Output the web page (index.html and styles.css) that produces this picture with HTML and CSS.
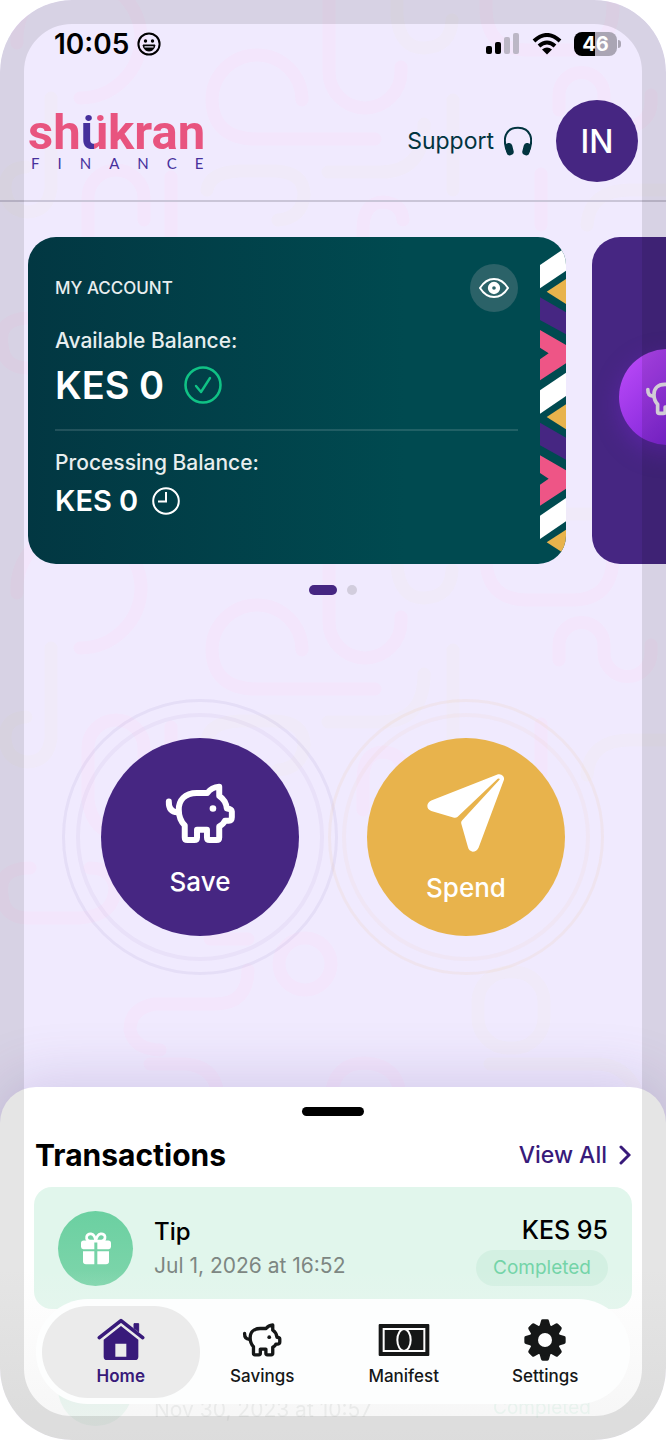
FILE: index.html
```
<!doctype html>
<html lang="en">
	<head>
		<meta charset="UTF-8" />
		<meta name="viewport" content="width=device-width, initial-scale=1.0" />
		<title>Shukran Finance</title>
		<link rel="stylesheet" href="styles.css">
	</head>
	<body>
		<!-- Shared icons -->
		<svg class="sprite" aria-hidden="true">
			<symbol id="pig" viewBox="0 0 216 196">
				<g fill="none" stroke="currentColor" stroke-width="18" stroke-linecap="round" stroke-linejoin="round">
					<path d="M14 62 Q13 93 40 94" />
					<path d="M130 36 H98 C62 36 44 58 44 86 C44 108 51 123 62 134 V170 Q62 178 70 178 H91 Q99 178 99 170 V147 H129 V170 Q129 178 137 178 H158 Q166 178 166 170 V137 C174 133 180 128 183 120 H194 Q204 119 204 109 V92 Q203 84 189 83 C187 67 179 53 166 45 V17 Q143 19 130 36 Z" />
				</g>
				<circle cx="147" cy="83" r="10" fill="currentColor" />
			</symbol>
			<symbol id="gift" viewBox="0 0 90 98">
				<g fill="currentColor">
					<path d="M8 25 H40 V51 H7 Q0 51 0 44 V33 Q0 25 8 25 Z M49 25 H82 Q90 25 90 33 V44 Q90 51 83 51 H49 Z M6 57 H40 V96 H15 Q6 96 6 88 Z M49 57 H84 V88 Q84 96 75 96 H49 Z" />
				</g>
				<path d="M43 27 H27 Q15 25 17 13 Q20 4 30 5 Q42 7 44 27 Q48 7 59 5 Q70 4 72 13 Q73 25 62 27 Z" fill="none" stroke="currentColor" stroke-width="8" />
			</symbol>
		</svg>

		<div class="phone">
			<svg class="doodles" aria-hidden="true">
				<defs>
					<pattern id="doodle" y="-10" width="800" height="550" patternUnits="userSpaceOnUse">
						<g transform="translate(0 -540)" fill="none" stroke-width="13" stroke-linecap="round">
							<g stroke="#f3e6fc">
								<path d="M17 593 A62 62 0 0 1 141 586 A61 61 0 0 1 80 648" />
								<path d="M302 650 A45 45 0 0 0 212 650 Q213 689 257 689 H375" />
								<path d="M329 530 V622 A36 36 0 0 0 401 622 V617" />
								<path d="M486 530 V558 Q486 600 528 600 H572 Q613 600 613 556 V530" />
								<path d="M559 660 V645 A22 22 0 0 1 604 645 V653 A23 23 0 0 0 651 653 V645" />
								<path d="M171 900 V727" />
								<path d="M144 770 V748 A28 28 0 0 0 88 748 V800 Q92 832 122 836" />
								<path d="M30 868 Q-2 868 2 895 Q4 918 28 918 H80 Q115 916 115 887 Q112 868 90 868" />
								<path d="M210 939 H248" />
								<path d="M248 970 Q248 1004 215 1004 H155 Q130 1008 130 1030 Q134 1049 160 1050" />
								<path d="M150 1064 H185 Q215 1066 218 1095" />
								<path d="M331 1095 Q335 1063 365 1063 Q398 1065 400 1095" />
								<path d="M363 810 V780 Q363 752 384 752 Q402 754 403 770" />
								<path d="M541 724 V775" />
								<circle cx="305" cy="964" r="26" />
							</g>
							<g stroke="#f0eaf9">
								<path d="M397 530 V565 Q399 598 424 598 Q451 597 452 570" />
								<path d="M51 648 V738 Q48 762 27 762 Q5 760 5 736 Q6 718 26 717" />
								<path d="M453 650 V740" />
								<path d="M424 674 Q424 722 380 722 H328" />
								<path d="M207 740 Q210 722 240 721 H275 Q304 722 304 745 Q302 768 278 770" />
								<path d="M587 775 Q590 740 630 740 H680" />
								<rect x="478" y="972" width="66" height="76" rx="30" />
								<path d="M490 1064 H600 Q625 1066 636 1090" />
							</g>
						</g>
					</pattern>
				</defs>
				<rect width="100%" height="100%" fill="url(#doodle)" />
			</svg>

			<div class="status-bar">
				<div class="clock">
					<span>10:05</span>
					<svg width="24" height="24" viewBox="0 0 24 24" fill="none" stroke="#000" stroke-width="2">
						<circle cx="12" cy="12" r="10.6" />
						<path d="M6 13 H18 Q17 19 12 19 Q7 19 6 13 Z" fill="#000" stroke-width="1" />
						<path d="M7.500 14.800 H16.500" stroke="#efeafe" stroke-width="1.300" />
						<circle cx="8.500" cy="9" r="1.700" fill="#000" stroke="none" />
						<circle cx="15.500" cy="9" r="1.700" fill="#000" stroke="none" />
					</svg>
				</div>
				<div class="signals">
					<svg width="34" height="22" viewBox="0 0 34 22">
						<rect y="13" width="6" height="8" rx="2" />
						<rect x="9" y="9" width="6" height="12" rx="2" />
						<rect x="18" y="4" width="6" height="17" rx="2" fill="#bcb7c6" />
						<rect x="27" width="6" height="21" rx="2" fill="#bcb7c6" />
					</svg>
					<svg width="30" height="22" viewBox="0 0 30 22" fill="none" stroke="#000" stroke-width="4">
						<path d="M2 8 Q15 -4 28 8" />
						<path d="M7 13 Q15 6 23 13" />
						<path d="M10 16.500 Q15 12.500 20 16.500 L15 21.500 Z" fill="#000" stroke="none" />
					</svg>
					<span class="battery">46</span>
				</div>
			</div>

			<header class="top-bar">
				<a class="logo" href="#">
					<span class="logo-name">sh<span class="logo-u">ü</span>kran</span>
					<span class="logo-sub">FINANCE</span>
				</a>
				<a class="support" href="#">
					Support
					<svg width="28" height="30" viewBox="0 0 84 88">
						<path d="M10 76 C-6 38 4 4 42 4 C80 4 90 38 74 76" fill="none" stroke="#02343f" stroke-width="6" />
						<rect x="5" y="50" width="22" height="37" rx="10" transform="rotate(-14 16 68)" fill="#02343f" />
						<rect x="57" y="50" width="22" height="37" rx="10" transform="rotate(14 68 68)" fill="#02343f" />
					</svg>
				</a>
				<button class="avatar">IN</button>
			</header>

			<section class="carousel">
				<article class="card account">
					<div class="card-head">
						<h2>MY ACCOUNT</h2>
						<button class="eye" aria-label="Hide balance">
							<svg width="30" height="20" viewBox="0 0 90 60" fill="none" stroke="#fff">
								<path d="M3 30 Q20 3 45 3 Q70 3 87 30 Q70 57 45 57 Q20 57 3 30 Z" stroke-width="6" />
								<circle cx="45" cy="30" r="12" stroke-width="13" />
							</svg>
						</button>
					</div>
					<p class="label">Available Balance:</p>
					<p class="amount">
						KES 0
						<svg width="38" height="38" viewBox="0 0 38 38" fill="none" stroke="#10c285" stroke-linecap="round" stroke-linejoin="round">
							<circle cx="19" cy="19" r="17.500" stroke-width="2.600" />
							<path d="M12 20 L17 26 L26 12" stroke-width="2.400" />
						</svg>
					</p>
					<hr />
					<p class="label">Processing Balance:</p>
					<p class="amount small">
						KES 0
						<svg width="28" height="28" viewBox="0 0 28 28" fill="none" stroke="#fff" stroke-width="2">
							<circle cx="14" cy="14" r="12.800" />
							<path d="M14 5 V14.500 H6" />
						</svg>
					</p>
					<svg class="kente" viewBox="624 51 78 981" preserveAspectRatio="none" aria-hidden="true">
						<g id="kente-top">
							<path d="M624 135 L702 82 V152 L624 205 Z" fill="#fff" />
							<path d="M644 215 L702 177 V252 Z" fill="#e8b34c" />
						</g>
						<g id="kente-bottom">
							<path d="M624 232 L702 277 V343 L624 300 Z" fill="#462682" />
							<path d="M624 330 L702 375 V430 L624 481 V418 L650 400 L624 383 Z" fill="#ee5586" />
						</g>
						<use href="#kente-top" y="376" />
						<use href="#kente-bottom" y="376" />
						<use href="#kente-top" y="752" />
					</svg>
				</article>
				<article class="card savings-card">
					<span class="savings-icon">
						<svg width="44" height="40"><use href="#pig" /></svg>
					</span>
				</article>
			</section>

			<div class="dots">
				<span class="dot current"></span>
				<span class="dot"></span>
			</div>

			<div class="actions">
				<button class="action save">
					<svg width="72" height="65"><use href="#pig" /></svg>
					Save
				</button>
				<button class="action spend">
					<svg width="78" height="78" viewBox="0 0 234 236" fill="#fff">
						<path d="M214 1 Q223 -1 229 6 Q234 12 231 20 L155 223 Q149 235 137 235 Q126 233 123 222 L103 151 Q101 145 105 141 L219 17 Q219 12 213 14 L91 130 Q87 133 81 132 L12 112 Q0 107 0 96 Q1 85 12 80 Z" />
					</svg>
					Spend
				</button>
			</div>

			<section class="sheet">
				<div class="handle"></div>
				<div class="sheet-head">
					<h1>Transactions</h1>
					<a class="view-all" href="#">
						View All
						<svg width="12" height="20" viewBox="0 0 12 20" fill="none" stroke="#381a7a" stroke-width="3" stroke-linecap="round">
							<path d="M2 2 L10 10 L2 18" />
						</svg>
					</a>
				</div>
				<ul class="transactions">
					<li class="transaction">
						<span class="tx-icon">
							<svg width="30" height="33"><use href="#gift" /></svg>
						</span>
						<div class="tx-info">
							<p class="tx-name">Tip</p>
							<p class="tx-date">Jul 1, 2026 at 16:52</p>
						</div>
						<div class="tx-side">
							<p class="tx-amount">KES 95</p>
							<span class="tx-status">Completed</span>
						</div>
					</li>
					<li class="transaction behind">
						<span class="tx-icon"></span>
						<div class="tx-info">
							<p class="tx-date">Nov 30, 2023 at 10:57</p>
						</div>
						<div class="tx-side">
							<span class="tx-status">Completed</span>
						</div>
					</li>
				</ul>
			</section>

			<nav class="tab-bar">
				<a class="tab active" href="#">
					<svg width="48" height="44" viewBox="0 0 144 130">
						<path d="M7 58 L72 7 L137 58" fill="none" stroke="currentColor" stroke-width="11" stroke-linecap="round" stroke-linejoin="round" />
						<path d="M111 16 H125 V40 L111 29 Z" fill="currentColor" stroke="currentColor" stroke-width="3" stroke-linejoin="round" />
						<path d="M72 23 L124 64 V115 Q124 125 114 125 H30 Q20 125 20 115 V64 Z M55 76 V115 H88 V76 Z" fill="currentColor" fill-rule="evenodd" />
					</svg>
					Home
				</a>
				<a class="tab" href="#">
					<svg width="40" height="44"><use href="#pig" /></svg>
					Savings
				</a>
				<a class="tab" href="#">
					<svg width="52" height="44" viewBox="0 0 156 132">
						<rect x="2" y="18" width="152" height="96" rx="3" fill="currentColor" />
						<rect x="17" y="33" width="122" height="66" fill="none" stroke="#fdfdfd" stroke-width="6" />
						<ellipse cx="78" cy="66" rx="20" ry="33" fill="currentColor" stroke="#fdfdfd" stroke-width="6" />
					</svg>
					Manifest
				</a>
				<a class="tab" href="#">
					<svg width="44" height="44" viewBox="-66 -66 132 132">
						<g fill="currentColor">
							<path id="tooth" d="M-17 -40 L-12 -58 Q-11 -62 -7 -62 H7 Q11 -62 12 -58 L17 -40 V40 L12 58 Q11 62 7 62 H-7 Q-11 62 -12 58 L-17 40 Z" />
							<use href="#tooth" transform="rotate(45)" />
							<use href="#tooth" transform="rotate(90)" />
							<use href="#tooth" transform="rotate(135)" />
							<circle r="46" />
						</g>
						<circle r="21" fill="#fdfdfd" />
					</svg>
					Settings
				</a>
			</nav>
		</div>
	</body>
</html>
```
FILE: styles.css
```
* {
	box-sizing: border-box;
}
body {
	margin: 0;
	background-color: #fff;
	font-family: Inter, "Liberation Sans", sans-serif;
	color: #000;
}
h1,
h2,
p,
ul {
	margin: 0;
	padding: 0;
}
a {
	color: inherit;
	text-decoration: none;
}
button {
	border: none;
	padding: 0;
	font-family: inherit;
	color: #fff;
	cursor: pointer;
}
svg {
	display: block;
	flex-shrink: 0;
}
.sprite {
	position: absolute;
	width: 0;
	height: 0;
}
.phone {
	position: relative;
	display: flex;
	flex-direction: column;
	height: 100vh;
	min-height: 1200px;
	overflow: hidden;
	border-radius: 72px;
	background-color: #f0eafe;
}
/* translucent bezel over the whole screen */
.phone::after {
	content: "";
	position: absolute;
	inset: 0;
	border: 24px solid rgba(0, 0, 0, 0.1);
	border-radius: 72px;
	pointer-events: none;
}
.doodles {
	position: absolute;
	inset: 0;
	width: 100%;
	height: 100%;
}
.status-bar,
.top-bar,
.carousel,
.dots,
.actions,
.sheet {
	position: relative;
}

/* Status bar */
.status-bar {
	display: flex;
	justify-content: space-between;
	align-items: center;
	height: 88px;
	padding: 0 49px 0 54px;
}
.clock {
	display: flex;
	align-items: center;
	gap: 8px;
	font-size: 28px;
	font-weight: 600;
}
.signals {
	display: flex;
	align-items: center;
	gap: 12px;
}
.battery {
	position: relative;
	width: 43px;
	height: 24px;
	border-radius: 8px;
	background: linear-gradient(to right, #000 48%, #aaa5b4 48%);
	color: #fff;
	font-size: 20px;
	font-weight: 700;
	line-height: 24px;
	text-align: center;
}
.battery::after {
	content: "";
	position: absolute;
	left: 44px;
	top: 8px;
	width: 3px;
	height: 8px;
	border-radius: 0 4px 4px 0;
	background-color: #aaa5b4;
}

/* Header */
.top-bar {
	display: flex;
	align-items: center;
	height: 114px;
	padding: 0 28px 6px;
	border-bottom: 2px solid #cac5d8;
}
.logo {
	display: flex;
	flex-direction: column;
	margin-right: auto;
}
.logo-name {
	color: #e8547f;
	font-family: Roboto, sans-serif;
	font-size: 49px;
	font-weight: 700;
	line-height: 44px;
}
.logo-u {
	background: linear-gradient(to right, #46309c 50%, #e8547f 50%);
	background-clip: text;
	-webkit-background-clip: text;
	color: transparent;
}
.logo-sub {
	padding-left: 3px;
	color: #46309c;
	font-family: Lato, sans-serif;
	font-size: 15px;
	line-height: 16px;
	letter-spacing: 18px;
	margin-right: -18px;
}
.support {
	display: flex;
	align-items: center;
	gap: 10px;
	color: #02343f;
	font-size: 23px;
}
.avatar {
	width: 82px;
	height: 82px;
	margin-left: 24px;
	border-radius: 50%;
	background-color: #462682;
	font-size: 32px;
	font-weight: 500;
}

/* Account cards */
.carousel {
	display: flex;
	gap: 26px;
	padding: 35px 0 0 28px;
	overflow: hidden;
}
.card {
	position: relative;
	flex: 0 0 calc(100% - 100px);
	border-radius: 28px;
	overflow: hidden;
}
.account {
	padding: 27px 48px 43px 27px;
	background: linear-gradient(to right, #023742, #004a50 70%);
	color: #fff;
}
.card-head {
	display: flex;
	justify-content: space-between;
	align-items: center;
}
.card-head h2 {
	color: #e8eeef;
	font-size: 17px;
	font-weight: 500;
}
.eye {
	display: grid;
	place-items: center;
	width: 48px;
	height: 48px;
	border-radius: 50%;
	background-color: #2b6268;
}
.label {
	margin-top: 15px;
	color: #e8eeef;
	font-size: 21px;
	font-weight: 500;
	line-height: 28px;
}
.amount {
	display: flex;
	align-items: center;
	gap: 20px;
	margin-top: 6px;
	font-size: 38px;
	font-weight: 600;
	line-height: 48px;
}
.amount.small {
	gap: 14px;
	margin-top: 4px;
	font-size: 29px;
	line-height: 40px;
}
.account hr {
	height: 2px;
	margin: 20px 0 18px;
	border: none;
	background-color: rgba(255, 255, 255, 0.13);
}
.account hr + .label {
	margin-top: 0;
}
.kente {
	position: absolute;
	top: 0;
	right: 0;
	width: 26px;
	height: 100%;
}
.savings-card {
	display: flex;
	align-items: center;
	padding: 0 0 8px 27px;
	background-color: #462682;
}
.savings-icon {
	display: grid;
	place-items: center;
	width: 96px;
	height: 96px;
	border-radius: 50%;
	background: linear-gradient(135deg, #c04dfb, #7a22d4 80%);
	box-shadow: 0 8px 24px rgba(122, 34, 212, 0.4);
	color: #e9e5ee;
}
.dots {
	display: flex;
	justify-content: center;
	gap: 10px;
	padding-top: 21px;
}
.dot {
	width: 10px;
	height: 10px;
	border-radius: 5px;
	background-color: #d2cddd;
}
.dot.current {
	width: 28px;
	background-color: #462682;
}

/* Save and spend */
.actions {
	display: flex;
	flex: 1;
	justify-content: center;
	align-items: center;
	gap: 68px;
	padding-bottom: 8px;
}
.action {
	position: relative;
	display: flex;
	flex-direction: column;
	justify-content: center;
	align-items: center;
	gap: 18px;
	width: 198px;
	height: 198px;
	padding-top: 6px;
	border-radius: 50%;
	font-size: 26px;
	font-weight: 500;
	line-height: 36px;
}
.action::before,
.action::after {
	content: "";
	position: absolute;
	border: 4px solid rgba(70, 38, 130, 0.04);
	border-radius: 50%;
}
.action::before {
	inset: -25px;
}
.action::after {
	inset: -39px;
	border-width: 3px;
	border-color: rgba(70, 38, 130, 0.06);
}
.save {
	background-color: #462682;
}
.spend {
	background-color: #e8b34c;
}
.spend::before {
	border-color: rgba(240, 190, 130, 0.07);
}
.spend::after {
	border-color: rgba(240, 190, 130, 0.12);
}

/* Transactions */
.sheet {
	flex: 0 0 353px;
	min-height: 0;
	padding: 20px 34px 0;
	border-radius: 36px 36px 0 0;
	background-color: #fff;
	box-shadow: 0 -6px 60px rgba(90, 70, 150, 0.2);
}
.handle {
	width: 62px;
	height: 9px;
	margin: 0 auto;
	border-radius: 5px;
	background-color: #000;
}
.sheet-head {
	display: flex;
	justify-content: space-between;
	align-items: center;
	height: 71px;
	padding: 6px 1px 0;
}
.sheet-head h1 {
	font-size: 30px;
	font-weight: 700;
}
.view-all {
	display: flex;
	align-items: center;
	gap: 12px;
	color: #381a7a;
	font-size: 23px;
	font-weight: 500;
}
.transactions {
	display: flex;
	flex-direction: column;
	gap: 18px;
	list-style: none;
}
.transaction {
	display: flex;
	align-items: center;
	height: 122px;
	padding: 0 24px;
	border-radius: 18px;
	background-color: #e1f6ec;
}
.tx-icon {
	display: grid;
	place-items: center;
	width: 75px;
	height: 75px;
	border-radius: 50%;
	background: linear-gradient(#6bd0a1, #7ed5ab);
	color: #fff;
}
.tx-info {
	flex: 1;
	padding-left: 21px;
}
.tx-name {
	font-size: 24px;
	font-weight: 500;
	line-height: 36px;
}
.tx-date {
	color: #7d8682;
	font-size: 21px;
	line-height: 32px;
}
.tx-side {
	display: flex;
	flex-direction: column;
	align-items: flex-end;
}
.tx-amount {
	font-size: 25px;
	font-weight: 500;
	line-height: 40px;
}
.tx-status {
	padding: 0 17px;
	border-radius: 18px;
	background-color: #d3f0e2;
	color: #74d4a8;
	font-size: 19px;
	line-height: 36px;
}
.transaction.behind {
	align-items: flex-end;
	padding-bottom: 23px;
	background: none;
	opacity: 0.3;
}
.behind .tx-status {
	background: none;
}
/* fade of the list towards the screen edge */
.sheet::after {
	content: "";
	position: absolute;
	left: 0;
	right: 0;
	bottom: 0;
	height: 170px;
	background: linear-gradient(rgba(242, 242, 242, 0), rgba(243, 243, 243, 0.8));
}

/* Bottom tab bar, floats over the list */
.tab-bar {
	position: absolute;
	left: 36px;
	right: 36px;
	bottom: 36px;
	display: flex;
	height: 105px;
	padding: 0 14px;
	border-radius: 52px;
	background-color: #fdfefe;
}
.tab {
	position: relative;
	display: flex;
	flex: 1;
	flex-direction: column;
	align-items: center;
	padding-top: 19px;
	color: #151717;
	font-size: 17px;
	font-weight: 500;
	line-height: 28px;
}
.tab svg {
	position: relative;
}
.tab.active {
	z-index: 0;
	color: #381a7a;
	font-weight: 600;
}
.tab.active::before {
	content: "";
	position: absolute;
	z-index: -1;
	inset: 7px -8px 6px;
	border-radius: 46px;
	background-color: #ebebeb;
}
```
